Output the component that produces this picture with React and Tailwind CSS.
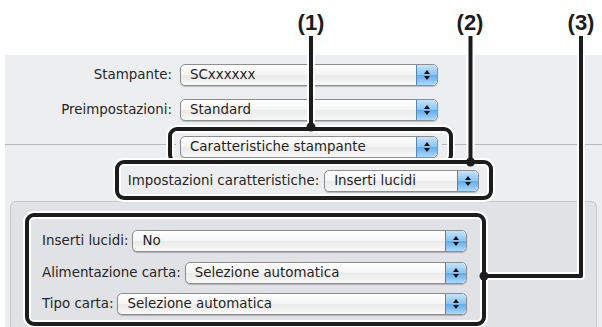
function Stepper() {
  return (
    <div className="flex w-[21px] flex-col items-center justify-center gap-[2px] rounded-r-[5px] border-l border-[#4f86c6] bg-[linear-gradient(180deg,#c4e3fb_0%,#8cc6f3_48%,#62acec_52%,#a9dafd_100%)]">
      <svg width="6" height="4" viewBox="0 0 6 4">
        <path d="M3 0L6 4H0Z" fill="#111" />
      </svg>
      <svg width="6" height="4" viewBox="0 0 6 4">
        <path d="M0 0H6L3 4Z" fill="#111" />
      </svg>
    </div>
  );
}

function Popup({ value, className = "" }) {
  return (
    <div
      className={`flex h-[22px] items-stretch rounded-[5px] border border-[#8e8e8e] bg-[linear-gradient(180deg,#ffffff_0%,#f5f5f5_48%,#eaeaea_52%,#f8f8f8_100%)] shadow-[0_1px_1px_rgba(0,0,0,0.22)] ${className}`}
    >
      <span className="flex-1 truncate pl-[9px] text-[13.4px] leading-[20px] text-[#1f1f1f]">
        {value}
      </span>
      <Stepper />
    </div>
  );
}

function Label({ children, className = "" }) {
  return (
    <span className={`text-[13.4px] leading-[20px] text-[#262626] ${className}`}>
      {children}
    </span>
  );
}

function Callouts() {
  return (
    <svg
      className="pointer-events-none absolute inset-0"
      width="602"
      height="327"
      viewBox="0 0 602 327"
      fill="none"
    >
      {/* white halo first, then the black strokes */}
      <g stroke="#ffffff" strokeWidth="8" strokeLinejoin="round">
        <path d="M311 36V127" />
        <path d="M470.5 36V162" />
        <path d="M581 36V276H486" />
        <rect x="170" y="129" width="281" height="33" rx="7" />
      </g>
      <g stroke="#1c1c1c" strokeWidth="4" strokeLinejoin="round">
        <path d="M311 36V127" />
        <path d="M470.5 36V162" />
        <path d="M581 36V276H486" />
        <rect x="170" y="129" width="281" height="33" rx="7" />
      </g>
      <rect x="117" y="162" width="374" height="36" rx="7" stroke="#ffffff" strokeWidth="8" />
      <rect x="117" y="162" width="374" height="36" rx="7" stroke="#1c1c1c" strokeWidth="4" />
      <rect x="27" y="215" width="457" height="109" rx="7" stroke="#ffffff" strokeWidth="8" />
      <rect x="27" y="215" width="457" height="109" rx="7" stroke="#1c1c1c" strokeWidth="4" />
      <g fill="#1c1c1c">
        <circle cx="311" cy="127" r="4.5" />
        <circle cx="470.5" cy="162" r="4.5" />
        <circle cx="484" cy="276" r="4.5" />
      </g>
    </svg>
  );
}

export default function App() {
  return (
    <div className="relative h-[327px] w-[602px] overflow-hidden bg-white font-['DejaVu_Sans',sans-serif]">
      <div className="h-[55px]" />

      <div className="ml-[5px] flex h-[272px] flex-col bg-[#edeef0] pt-[9px]">
        <div className="flex items-center">
          <Label className="w-[167px] text-right">Stampante:</Label>
          <Popup value="SCxxxxxx" className="ml-[8px] w-[258px]" />
        </div>

        <div className="mt-[13px] flex items-center">
          <Label className="w-[167px] text-right">Preimpostazioni:</Label>
          <Popup value="Standard" className="ml-[8px] w-[258px]" />
        </div>

        <div className="mt-[15px] flex items-start">
          <div className="mt-[8px] h-px w-[171px] bg-[#b8b9bc]" />
          <Popup value="Caratteristiche stampante" className="ml-[4px] w-[258px]" />
          <div className="ml-[4px] mt-[8px] h-px flex-1 bg-[#b8b9bc]" />
        </div>

        <div className="mt-[12px] flex items-center justify-center">
          <Label>Impostazioni caratteristiche:</Label>
          <Popup value="Inserti lucidi" className="ml-[5px] w-[155px]" />
        </div>

        <div className="mx-[5px] mt-[9px] flex-1 rounded-t-[6px] border border-b-0 border-[#c8c9cc] bg-[#e1e2e5] pl-[31px] pr-[129px] pt-[28px]">
          <div className="flex items-center">
            <Label>Inserti lucidi:</Label>
            <Popup value="No" className="ml-[4px] flex-1" />
          </div>
          <div className="mt-[10px] flex items-center">
            <Label>Alimentazione carta:</Label>
            <Popup value="Selezione automatica" className="ml-[4px] flex-1" />
          </div>
          <div className="mt-[9px] flex items-center">
            <Label>Tipo carta:</Label>
            <Popup value="Selezione automatica" className="ml-[4px] flex-1" />
          </div>
        </div>
      </div>

      <Callouts />

      <span className="absolute left-[311px] top-[12px] -translate-x-1/2 font-['Liberation_Sans',sans-serif] text-[22px] font-bold leading-none text-[#1c1c1c]">
        (1)
      </span>
      <span className="absolute left-[470px] top-[12px] -translate-x-1/2 font-['Liberation_Sans',sans-serif] text-[22px] font-bold leading-none text-[#1c1c1c]">
        (2)
      </span>
      <span className="absolute left-[581px] top-[12px] -translate-x-1/2 font-['Liberation_Sans',sans-serif] text-[22px] font-bold leading-none text-[#1c1c1c]">
        (3)
      </span>
    </div>
  );
}
